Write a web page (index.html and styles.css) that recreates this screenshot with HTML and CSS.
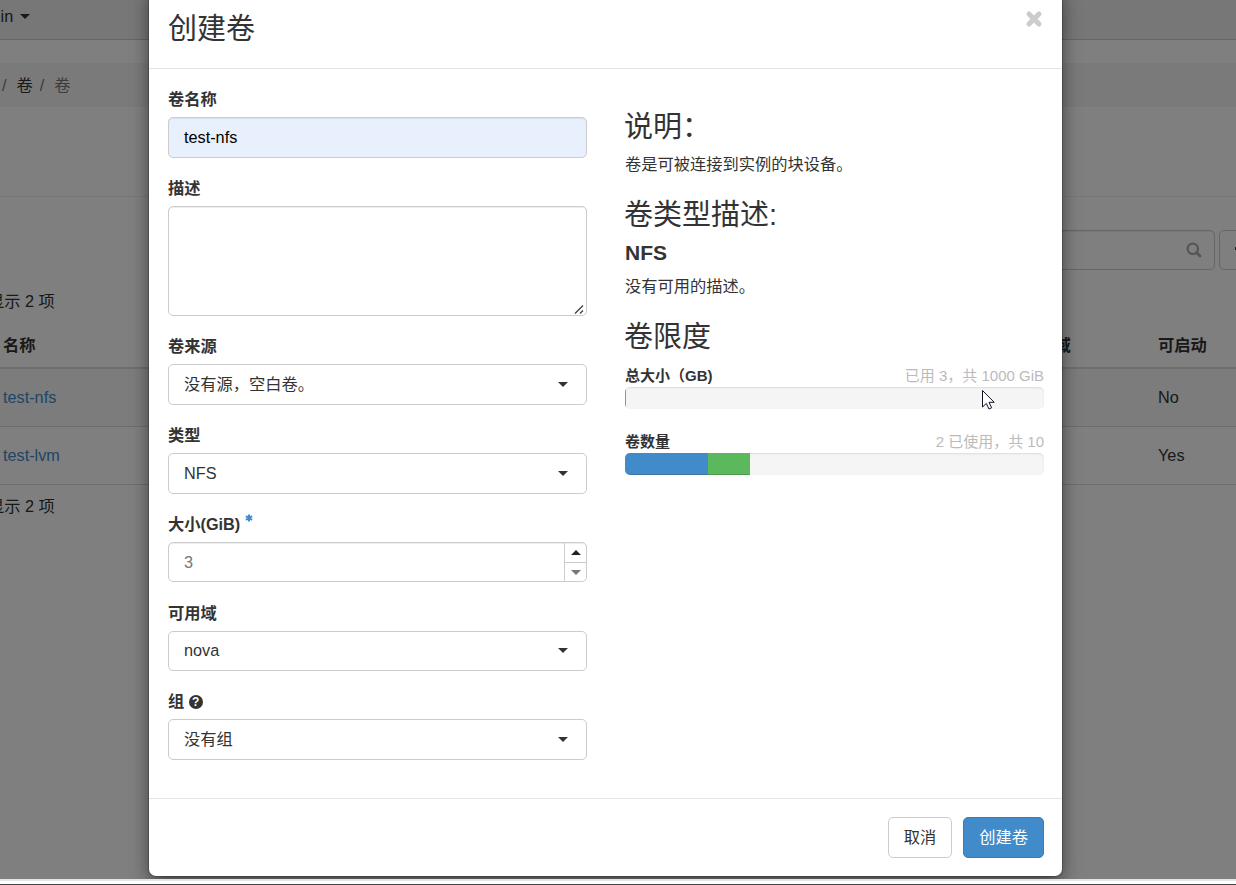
FILE: index.html
```html
<!DOCTYPE html>
<html lang="zh-CN">

<head>
    <meta charset="UTF-8">
    <meta name="viewport" content="width=device-width, initial-scale=1.0">
    <title>创建卷</title>
    <link rel="stylesheet" href="styles.css">
</head>

<body>
    <div class="page">
        <div class="navbar">admin <span class="caret"></span></div>
        <div class="breadcrumb">
            <span>/</span><a>卷</a><span>/</span><span class="active">卷</span>
        </div>
        <div class="toolbar">
            <div class="search">
                <svg width="16" height="16" viewBox="0 0 16 16" fill="none" stroke="#aaa">
                    <circle cx="6.8" cy="6.8" r="5.2" stroke-width="2.2" />
                    <path d="M10.7 10.7 L14 14" stroke-width="2.8" stroke-linecap="round" />
                </svg>
            </div>
            <div class="filter"><span class="filter-mark"></span></div>
        </div>
        <div class="count">显示 2 项</div>
        <table>
            <tr>
                <th>名称</th>
                <th class="zone">可用域</th>
                <th class="boot">可启动</th>
            </tr>
            <tr class="odd">
                <td><a>test-nfs</a></td>
                <td></td>
                <td class="boot">No</td>
            </tr>
            <tr>
                <td><a>test-lvm</a></td>
                <td></td>
                <td class="boot">Yes</td>
            </tr>
        </table>
        <div class="count bottom">显示 2 项</div>

        <div class="backdrop">
            <div class="modal">
                <div class="modal-header">
                    <h3>创建卷</h3>
                    <svg class="close" width="18" height="18" viewBox="0 0 18 18" stroke="#ccc" stroke-width="5" stroke-linecap="round">
                        <path d="M4 4 L14 14 M14 4 L4 14" />
                    </svg>
                </div>
                <div class="modal-body">
                    <form class="column">
                        <div class="group">
                            <label>卷名称</label>
                            <input class="control filled" type="text" value="test-nfs">
                        </div>
                        <div class="group">
                            <label>描述</label>
                            <div class="control area">
                                <svg class="grip" width="10" height="10" viewBox="0 0 10 10" stroke="#444" stroke-width="1.4">
                                    <path d="M1 9.5 L9 1.5 M6 9.5 L9 6.5" />
                                </svg>
                            </div>
                        </div>
                        <div class="group">
                            <label>卷来源</label>
                            <div class="control select">没有源，空白卷。<span class="caret"></span></div>
                        </div>
                        <div class="group">
                            <label>类型</label>
                            <div class="control select">NFS<span class="caret"></span></div>
                        </div>
                        <div class="group">
                            <label>大小(GiB)
                                <svg class="required" width="8" height="8" viewBox="0 0 8 8" stroke="#428bca" stroke-width="2">
                                    <path d="M4 .4 V7.6 M.9 2.2 L7.1 5.8 M7.1 2.2 L.9 5.8" />
                                </svg>
                            </label>
                            <div class="control number">
                                <span>3</span>
                                <div class="spinner">
                                    <div><span class="up"></span></div>
                                    <div><span class="down"></span></div>
                                </div>
                            </div>
                        </div>
                        <div class="group">
                            <label>可用域</label>
                            <div class="control select">nova<span class="caret"></span></div>
                        </div>
                        <div class="group">
                            <label>组 <span class="help">?</span></label>
                            <div class="control select">没有组<span class="caret"></span></div>
                        </div>
                    </form>
                    <div class="column info">
                        <h3>说明：</h3>
                        <p>卷是可被连接到实例的块设备。</p>
                        <h3>卷类型描述:</h3>
                        <h4>NFS</h4>
                        <p>没有可用的描述。</p>
                        <h3>卷限度</h3>
                        <div class="quota">
                            <strong>总大小（GB)</strong>
                            <span>已用 3，共 1000 GiB</span>
                        </div>
                        <div class="progress">
                            <div class="added" style="width: 0.3%"></div>
                        </div>
                        <div class="quota">
                            <strong>卷数量</strong>
                            <span>2 已使用，共 10</span>
                        </div>
                        <div class="progress">
                            <div class="used" style="width: 19.8%"></div>
                            <div class="added" style="width: 10%"></div>
                        </div>
                    </div>
                </div>
                <div class="modal-footer">
                    <button>取消</button>
                    <button class="primary">创建卷</button>
                </div>
            </div>
        </div>
    </div>
    <div class="window-edge"></div>

    <svg class="cursor" width="13" height="20" viewBox="0 0 13 20">
        <path d="M.5 .5 V17 L4.3 13.4 L7 19 L9.6 17.8 L7 12.3 H12.2 Z" fill="#fff" stroke="#112" />
    </svg>
</body>

</html>
```

FILE: styles.css
```css
* {
    box-sizing: border-box;
}

body {
    margin: 0;
    height: 885px;
    overflow: hidden;
    font-family: "Liberation Sans", "Noto Sans CJK SC", sans-serif;
    font-size: 16.25px;
    line-height: 23px;
    color: #333;
}

a {
    color: #428bca;
}

h3,
h4,
p {
    margin: 0;
}

h3 {
    font-size: 29px;
    font-weight: normal;
    line-height: 32px;
}

.page {
    position: relative;
    height: 879px;
    overflow: hidden;
    background-color: #fff;
}

.caret {
    display: inline-block;
    border: 5px solid transparent;
    border-top-color: #333;
    border-bottom: 0;
}

.navbar {
    height: 40px;
    padding-top: 5px;
    margin-left: -31px;
    background-color: #eee;
    border-bottom: 1px solid #ccc;
}

.navbar .caret {
    vertical-align: 3px;
    margin-left: 2px;
}

.breadcrumb {
    display: flex;
    height: 44px;
    margin-top: 23px;
    padding-left: 2px;
    align-items: center;
    background-color: #f5f5f5;
    color: #777;
}

.breadcrumb a {
    color: #333;
    margin: 0 7px 0 10px;
}

.breadcrumb .active {
    margin-left: 10px;
}

.toolbar {
    display: flex;
    justify-content: flex-end;
    gap: 4px;
    margin-top: 89px;
    padding-top: 33px;
    border-top: 1px solid #eee;
}

.search,
.filter {
    display: flex;
    align-items: center;
    height: 40px;
    border: 1px solid #ccc;
    border-radius: 5px;
}

.search {
    width: 300px;
    padding-right: 12px;
    justify-content: flex-end;
    box-shadow: inset 0 1px 1px rgba(0, 0, 0, 0.075);
}

.filter {
    width: 40px;
    padding-left: 15px;
    margin-right: -23px;
}

.filter-mark {
    width: 6px;
    height: 3px;
    margin-bottom: 3px;
    background-color: #333;
}

.count {
    margin: 20px 0 0 -12px;
}

.count.bottom {
    margin-top: 10px;
}

table {
    width: 100%;
    margin-top: 10px;
    table-layout: fixed;
    border-collapse: collapse;
}

th,
td {
    height: 58px;
    padding: 0 0 0 3px;
    text-align: left;
    border-bottom: 1px solid #ddd;
}

th {
    height: 45px;
    padding-top: 1px;
    border-bottom-width: 2px;
}

th.zone {
    width: 139px;
}

.boot {
    width: 78px;
    padding-left: 0;
}

.odd {
    background-color: #f9f9f9;
}

.backdrop {
    position: absolute;
    inset: 0;
    background-color: rgba(0, 0, 0, 0.5);
}

.modal {
    position: absolute;
    left: 149px;
    bottom: 3px;
    width: 913px;
    background-color: #fff;
    border-radius: 7px;
    box-shadow: 0 0 0 1px rgba(0, 0, 0, 0.2), 0 6px 18px rgba(0, 0, 0, 0.5);
}

.modal-header {
    display: flex;
    justify-content: space-between;
    height: 81px;
    padding: 25px 19px 0;
    border-bottom: 1px solid #e5e5e5;
}

.modal-header .close {
    margin-top: -3px;
}

.modal-body {
    display: flex;
    gap: 38px;
    height: 729px;
    padding: 19.2px 18px 0 19px;
}

.column {
    flex: 1;
}

.group {
    margin-bottom: 19.2px;
}

label {
    display: block;
    height: 23px;
    margin-bottom: 6px;
    font-weight: bold;
}

.required {
    vertical-align: 8px;
}

.help {
    display: inline-block;
    width: 14px;
    height: 14px;
    border-radius: 50%;
    background-color: #333;
    color: #fff;
    font-size: 12px;
    line-height: 14px;
    text-align: center;
    vertical-align: 1px;
}

.control {
    display: flex;
    align-items: center;
    width: 100%;
    height: 40.6px;
    padding: 0 15px;
    border: 1px solid #ccc;
    border-radius: 5px;
    background-color: #fff;
    font: inherit;
}

.filled {
    background-color: #e8f0fe;
    color: #000;
    box-shadow: inset 0 1px 1px rgba(0, 0, 0, 0.075);
}

.area {
    height: 110px;
    padding: 0 2px 1px;
    justify-content: flex-end;
    align-items: flex-end;
    box-shadow: inset 0 1px 1px rgba(0, 0, 0, 0.075);
}

.select {
    justify-content: space-between;
    padding-right: 18px;
}

.number {
    justify-content: space-between;
    padding-right: 0;
    color: #777;
    box-shadow: inset 0 1px 1px rgba(0, 0, 0, 0.075);
}

.spinner {
    width: 22px;
    height: 100%;
    border-left: 1px solid #ccc;
}

.spinner div {
    display: flex;
    height: 50%;
    align-items: center;
    justify-content: center;
}

.spinner div + div {
    border-top: 1px solid #ccc;
}

.up,
.down {
    border: 5px solid transparent;
}

.up {
    border-bottom-color: #222;
    border-top: 0;
}

.down {
    border-top-color: #777;
    border-bottom: 0;
}

.info {
    padding-top: 22.8px;
}

.info h3 {
    margin-left: -1px;
}

.info p {
    margin: 10px 0 23px;
}

.info h4 {
    margin-top: 10px;
    font-size: 21px;
    line-height: 24px;
}

.quota {
    display: flex;
    justify-content: space-between;
    margin-top: 21px;
    font-size: 15px;
}

h3 + .quota {
    margin-top: 11px;
}

.quota span {
    color: #bbb;
}

.progress {
    display: flex;
    height: 22px;
    overflow: hidden;
    background-color: #f5f5f5;
    border-radius: 5px;
    box-shadow: inset 0 1px 2px rgba(0, 0, 0, 0.1);
}

.progress div {
    box-shadow: inset 0 -1px 0 rgba(0, 0, 0, 0.15);
}

.used {
    background-color: #428bca;
}

.added {
    background-color: #5cb85c;
}

.modal-footer {
    display: flex;
    justify-content: flex-end;
    gap: 11px;
    height: 78px;
    padding: 18px 18px 0;
    border-top: 1px solid #e5e5e5;
}

button {
    height: 41px;
    padding: 0 15px;
    border: 1px solid #ccc;
    border-radius: 5px;
    background-color: #fff;
    color: #333;
    font: inherit;
}

button.primary {
    background-color: #428bca;
    border-color: #357ebd;
    color: #fff;
}

.window-edge {
    height: 6px;
    background-color: #fff;
    border-top: 2px solid #e6e4e6;
    border-bottom: 1px solid #444;
}

.cursor {
    position: absolute;
    left: 982px;
    top: 390px;
}
```
